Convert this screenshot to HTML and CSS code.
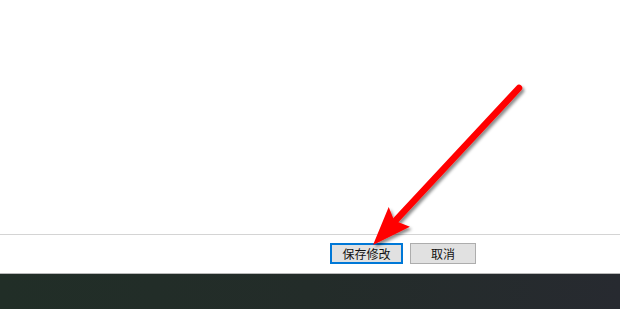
FILE: index.html
```html
<!DOCTYPE html>
<html lang="zh-CN">
<head>
<meta charset="utf-8">
<title>保存修改</title>
<link rel="stylesheet" href="styles.css">
</head>
<body>
<div class="page">
  <main class="content"></main>
  <footer class="actions">
    <button class="btn btn-primary" type="button">保存修改</button>
    <button class="btn btn-cancel" type="button">取消</button>
  </footer>
  <div class="taskbar"></div>
</div>
<svg class="arrow" width="620" height="309" viewBox="0 0 620 309" xmlns="http://www.w3.org/2000/svg">
  <defs>
    <filter id="shadow" x="-20%" y="-20%" width="140%" height="140%">
      <feDropShadow dx="2" dy="2.5" stdDeviation="1.5" flood-color="#000" flood-opacity="0.45"/>
    </filter>
  </defs>
  <g filter="url(#shadow)">
    <line x1="519" y1="88" x2="396" y2="220" stroke="#ff0000" stroke-width="6.5" stroke-linecap="round"/>
    <polygon points="373,245 388.7,207 394.2,220.4 409.9,226.8" fill="#ff0000"/>
  </g>
</svg>
</body>
</html>
```

FILE: styles.css
```css
html, body {
  margin: 0;
  padding: 0;
  background: #ffffff;
}

body {
  width: 620px;
  height: 309px;
  overflow: hidden;
  font-family: "Noto Sans CJK SC", "Noto Sans", sans-serif;
}

.page {
  display: flex;
  flex-direction: column;
  height: 309px;
}

.content {
  height: 234px;
  background: #ffffff;
  border-bottom: 1px solid #d4d4d4;
}

.actions {
  display: flex;
  align-items: flex-start;
  gap: 7px;
  padding: 8px 0 0 330px;
  height: 30px;
  box-sizing: content-box;
}

.btn {
  height: 21px;
  padding: 0;
  margin: 0;
  font-family: "Noto Sans CJK SC", "Noto Sans", sans-serif;
  font-size: 12px;
  line-height: 19px;
  color: #111;
  background: #e1e1e1;
  border: 1px solid #adadad;
  box-sizing: border-box;
}

.btn-primary {
  width: 73px;
  border: 2px solid #0078d7;
  line-height: 17px;
}

.btn-cancel {
  width: 66px;
}

.taskbar {
  flex: 1;
  border-top: 1px solid #b9b9b9;
  background: linear-gradient(90deg, #212e27 0%, #232c29 50%, #272a30 100%);
}

.arrow {
  position: absolute;
  left: 0;
  top: 0;
  pointer-events: none;
}
```
